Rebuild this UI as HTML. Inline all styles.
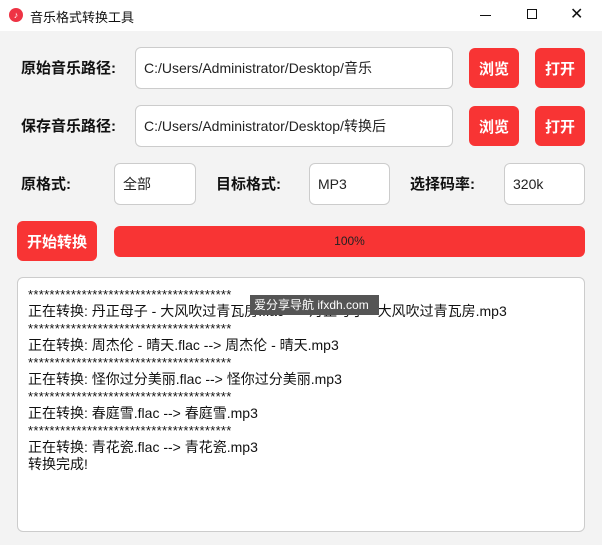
<!DOCTYPE html><html><head><meta charset="utf-8"><style>
*{margin:0;padding:0;box-sizing:border-box}
body{width:602px;height:545px;background:#f3f3f3;font-family:"Liberation Sans","Noto Sans CJK SC",sans-serif;position:relative;overflow:hidden}
.a{position:absolute}
.title{left:0;top:0;width:602px;height:31px;background:#fff}
.lbl{font-weight:bold;font-size:15px;color:#111}
.in{background:#fff;border:1px solid #ccc;border-radius:6px;font-size:14px;color:#222;padding-left:8px;display:flex;align-items:center}
.btn{background:#f83434;border-radius:6px;color:#fff;font-weight:bold;font-size:15px;display:flex;align-items:center;justify-content:center}
.log{left:17px;top:277px;width:568px;height:255px;background:#fff;border:1px solid #ccc;border-radius:6px;padding:8px 0 0 10px;font-size:14px;line-height:17px;color:#111}
.st{font-size:13px;line-height:17px;letter-spacing:0.3px}
</style></head><body>
<div class="a title">
<div class="a" style="left:9px;top:8px;width:14px;height:14px;border-radius:50%;background:#ee3344;color:#fff;font-size:9px;text-align:center;line-height:14px">♪</div>
<div class="a" style="left:30px;top:7px;font-size:13px;color:#111">音乐格式转换工具</div>
<div class="a" style="left:480px;top:15px;width:11px;height:1px;background:#111"></div>
<div class="a" style="left:527px;top:9px;width:10px;height:10px;border:1px solid #111"></div>
<div class="a" style="left:570px;top:4px;font-size:16px;color:#111">✕</div>
</div>
<div class="a lbl" style="left:21px;top:57px">原始音乐路径:</div>
<div class="a in" style="left:135px;top:47px;width:318px;height:42px">C:/Users/Administrator/Desktop/音乐</div>
<div class="a btn" style="left:469px;top:48px;width:50px;height:40px">浏览</div>
<div class="a btn" style="left:535px;top:48px;width:50px;height:40px">打开</div>
<div class="a lbl" style="left:21px;top:115px">保存音乐路径:</div>
<div class="a in" style="left:135px;top:105px;width:318px;height:42px">C:/Users/Administrator/Desktop/转换后</div>
<div class="a btn" style="left:469px;top:106px;width:50px;height:40px">浏览</div>
<div class="a btn" style="left:535px;top:106px;width:50px;height:40px">打开</div>
<div class="a lbl" style="left:21px;top:173px">原格式:</div>
<div class="a in" style="left:114px;top:163px;width:82px;height:42px">全部</div>
<div class="a lbl" style="left:216px;top:173px">目标格式:</div>
<div class="a in" style="left:309px;top:163px;width:81px;height:42px">MP3</div>
<div class="a lbl" style="left:410px;top:173px">选择码率:</div>
<div class="a in" style="left:504px;top:163px;width:81px;height:42px">320k</div>
<div class="a btn" style="left:17px;top:221px;width:80px;height:40px">开始转换</div>
<div class="a" style="left:114px;top:226px;width:471px;height:31px;background:#f83434;border-radius:6px;color:#222;font-size:12px;text-align:center;line-height:31px">100%</div>
<div class="a log">
<div class="st">**************************************</div>
<div>正在转换: 丹正母子 - 大风吹过青瓦房.flac --> 丹正母子 - 大风吹过青瓦房.mp3</div>
<div class="st">**************************************</div>
<div>正在转换: 周杰伦 - 晴天.flac --> 周杰伦 - 晴天.mp3</div>
<div class="st">**************************************</div>
<div>正在转换: 怪你过分美丽.flac --> 怪你过分美丽.mp3</div>
<div class="st">**************************************</div>
<div>正在转换: 春庭雪.flac --> 春庭雪.mp3</div>
<div class="st">**************************************</div>
<div>正在转换: 青花瓷.flac --> 青花瓷.mp3</div>
<div>转换完成!</div>
</div>
<div class="a" style="left:250px;top:295px;width:129px;height:20px;background:#555;color:#fff;font-size:12px;line-height:20px;padding-left:4px">爱分享导航 ifxdh.com</div>
</body></html>
